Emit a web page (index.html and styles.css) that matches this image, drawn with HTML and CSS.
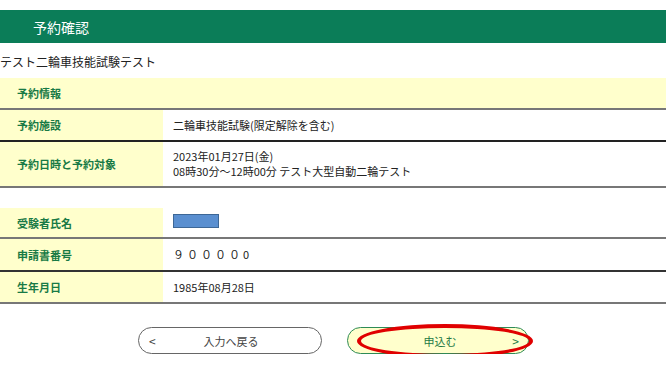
FILE: index.html
```html
<!DOCTYPE html>
<html lang="ja">
<head>
<meta charset="utf-8">
<link rel="stylesheet" href="styles.css">
</head>
<body>
<div class="page">
  <div class="titlebar"><span class="title">予約確認</span></div>
  <div class="subtitle">テスト二輪車技能試験テスト</div>

  <div class="table">
    <div class="row head"><div class="label">予約情報</div><div class="value"></div></div>
    <div class="row"><div class="label">予約施設</div><div class="value">二輪車技能試験(限定解除を含む)</div></div>
    <div class="row tall"><div class="label">予約日時と予約対象</div><div class="value">2023年01月27日(金)<br>08時30分～12時00分 テスト大型自動二輪テスト</div></div>
  </div>

  <div class="table second">
    <div class="row"><div class="label">受験者氏名</div><div class="value"><span class="masked"></span></div></div>
    <div class="row"><div class="label">申請書番号</div><div class="value spaced">９００００0</div></div>
    <div class="row"><div class="label">生年月日</div><div class="value">1985年08月28日</div></div>
  </div>

  <div class="buttons">
    <div class="btn back"><span class="arrow">&lt;</span><span class="btn-text">入力へ戻る</span></div>
    <div class="btn apply"><span class="btn-text">申込む</span><span class="arrow">&gt;</span><span class="ring"></span></div>
  </div>
</div>
</body>
</html>
```
FILE: styles.css
```css
* { box-sizing: border-box; }
html, body { margin: 0; padding: 0; background: #fff; }
body {
  font-family: "Noto Sans CJK JP", "Liberation Sans", sans-serif;
  font-size: 11px;
  color: #222;
  width: 666px;
}
.page { padding-top: 10px; width: 666px; }
.titlebar {
  background: #0b7d58;
  height: 33px;
  display: flex;
  align-items: center;
  padding-left: 33px;
}
.title { color: #fff; font-size: 14px; }
.subtitle {
  height: 35px;
  display: flex;
  align-items: center;
  font-size: 12px;
  color: #222;
  padding-top: 2px;
}
.table { width: 666px; }
.table.second { margin-top: 20px; }
.row {
  display: flex;
  border-bottom: 2px solid #555;
  min-height: 32px;
}
.row.head { min-height: 32px; border-bottom-color: #777; }
.row.head .value { background: #ffffcc; }
.row.tall { min-height: 46px; border-bottom-color: #777; }
.row:nth-child(2) { border-bottom-color: #222; }
.table.second .row:first-child { min-height: 31px; border-bottom-color: #777; }
.table.second .row:nth-child(2) { min-height: 33px; border-bottom-color: #333; }
.table.second .row:nth-child(3) { min-height: 32px; border-bottom-color: #777; }
.label {
  width: 163px;
  flex: none;
  background: #ffffcc;
  color: #187a45;
  font-weight: bold;
  display: flex;
  align-items: center;
  padding-left: 17px;
  font-size: 11px;
}
.value {
  flex: 1;
  display: flex;
  flex-direction: column;
  justify-content: center;
  padding-left: 10px;
  line-height: 15px;
  font-size: 11px;
}
.spaced { letter-spacing: 3px; }
.masked {
  display: block;
  width: 46px;
  height: 14px;
  background: #5a8fd0;
  border: 1px solid #3d6796;
  margin-top: -3px;
}
.buttons {
  display: flex;
  gap: 25px;
  padding-left: 138px;
  margin-top: 23px;
}
.btn {
  position: relative;
  height: 27px;
  border-radius: 14px;
  display: flex;
  align-items: center;
  font-size: 11px;
}
.btn.back {
  width: 184px;
  border: 1px solid #666;
  color: #444;
  background: #fff;
}
.btn.back .arrow { position: absolute; left: 10px; font-size: 12px; }
.btn.back .btn-text { flex: 1; text-align: center; padding-left: 2px; }
.btn.apply {
  width: 182px;
  border: 1px solid #2e8b57;
  color: #1e7a45;
  background: #ffffcc;
}
.btn.apply .btn-text { flex: 1; text-align: center; padding-left: 4px; }
.btn.apply .arrow { position: absolute; right: 9px; font-size: 12px; color: #1e7a45; }
.ring {
  position: absolute;
  left: 9px;
  top: -4px;
  width: 176px;
  height: 34px;
  border: 4px solid #e00000;
  border-radius: 50%;
}
```
